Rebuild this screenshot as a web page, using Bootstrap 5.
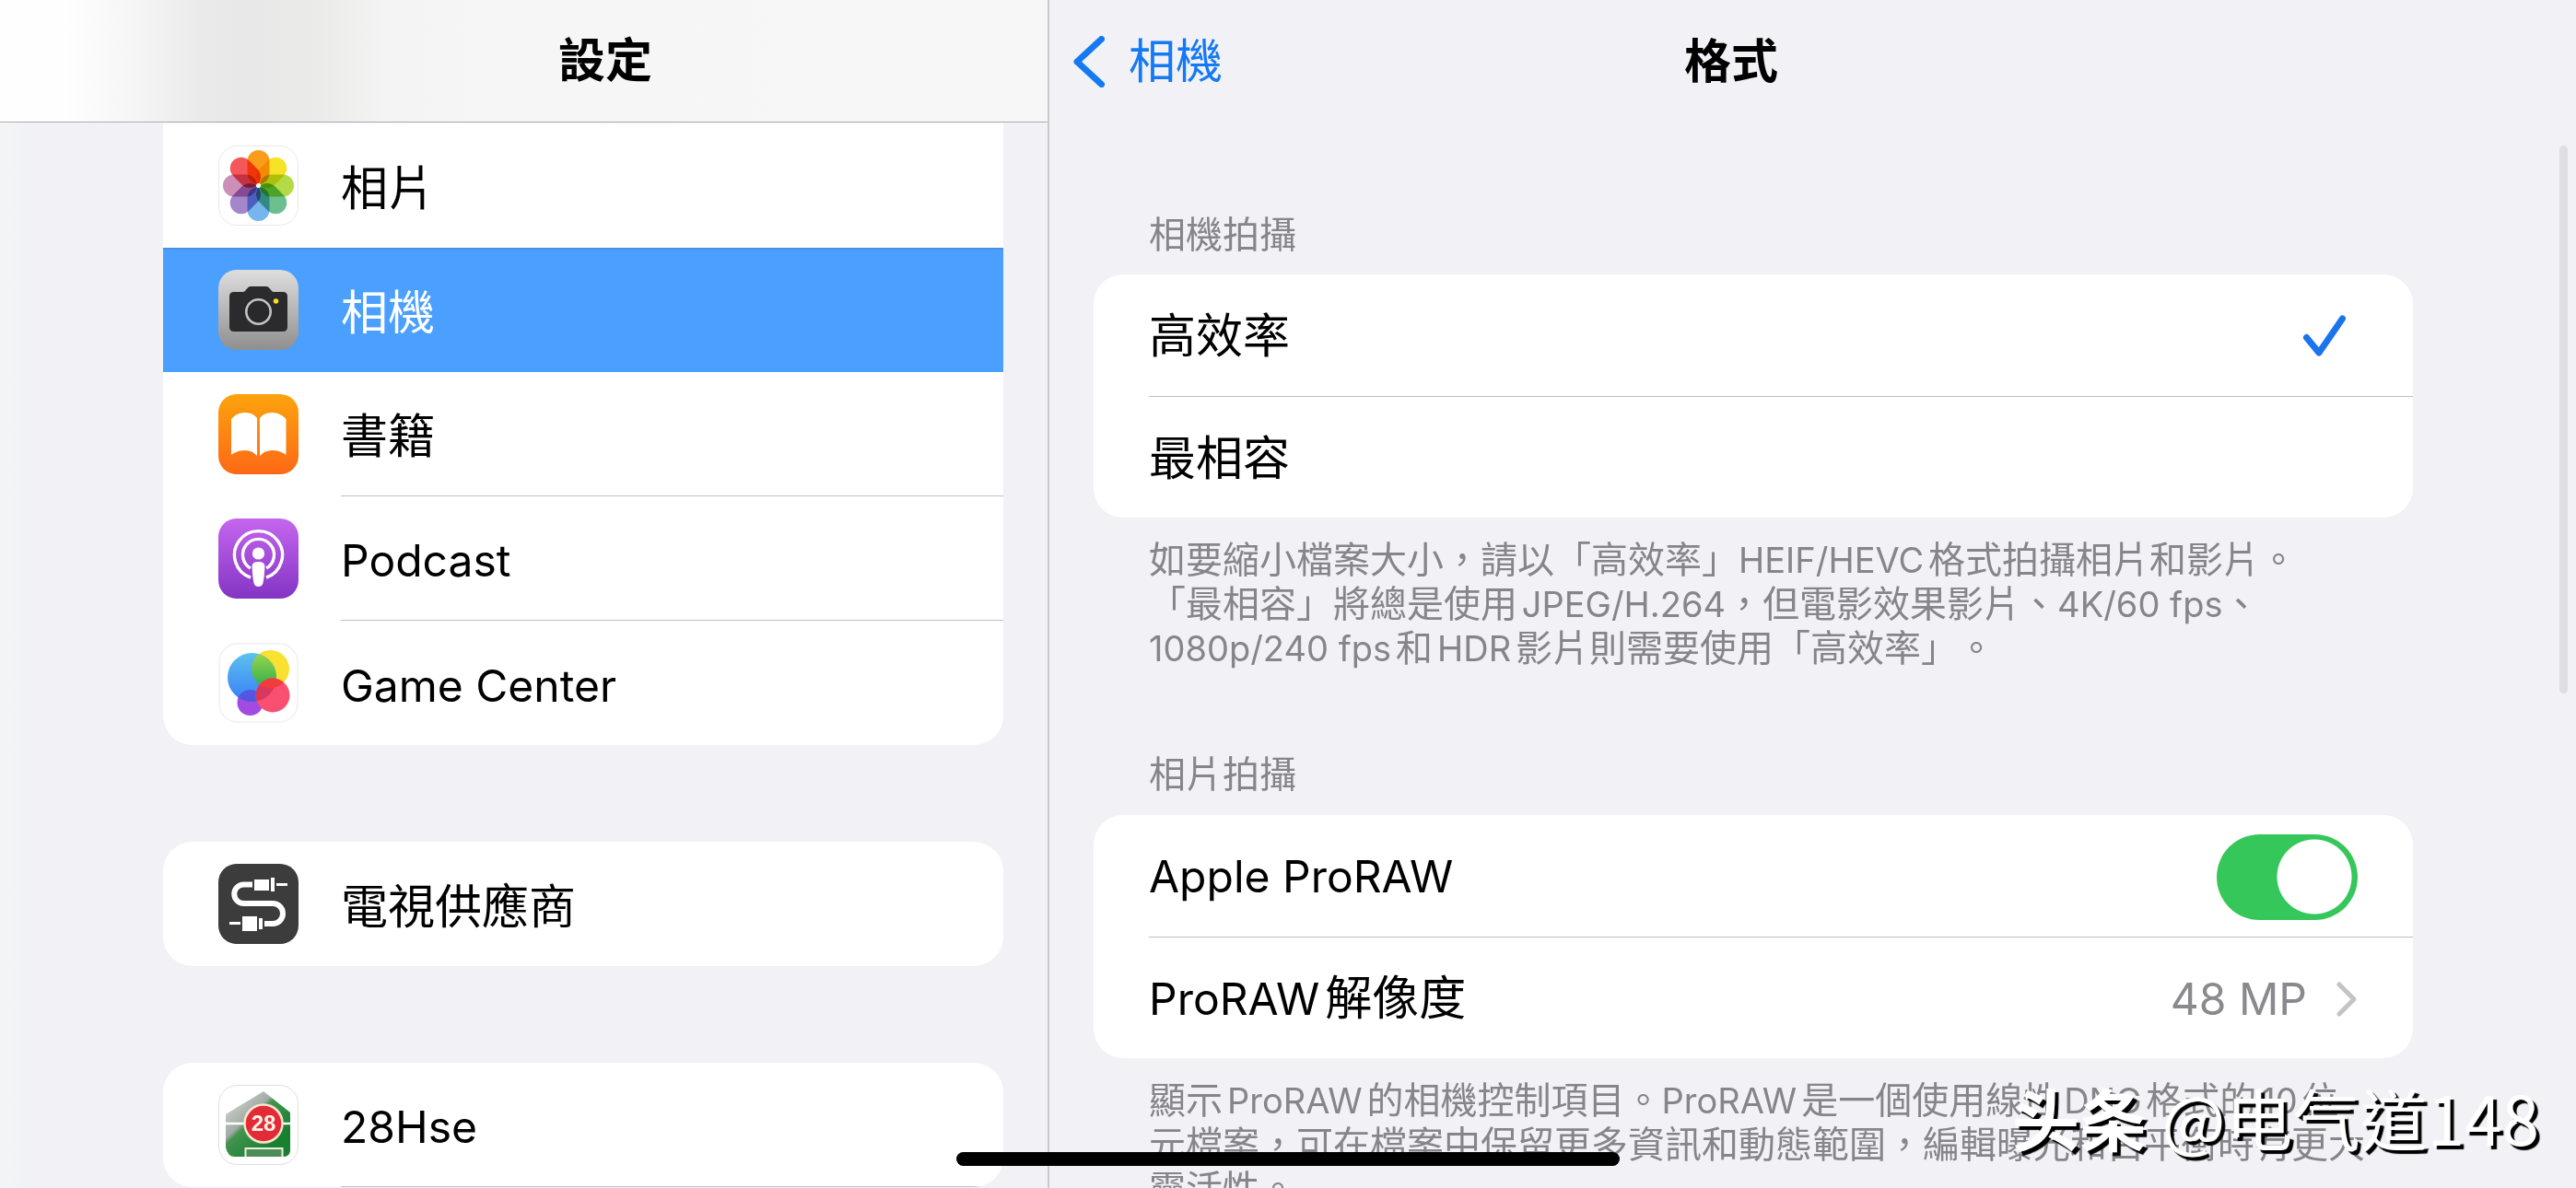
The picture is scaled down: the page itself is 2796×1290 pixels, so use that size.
<!DOCTYPE html>
<html lang="zh-Hant">
<head>
<meta charset="utf-8">
<meta name="viewport" content="width=device-width, initial-scale=1">
<title>設定</title>
<link href="https://cdn.jsdelivr.net/npm/bootstrap@5.3.0/dist/css/bootstrap.min.css" rel="stylesheet">
<script src="https://cdn.jsdelivr.net/npm/bootstrap@5.3.0/dist/js/bootstrap.bundle.min.js"></script>
<style>
  body { background: #f1f1f6; color: #000; font: 400 51px/64px Inter, "Noto Sans CJK TC", sans-serif; text-autospace: normal; text-spacing-trim: space-all; }
  a { text-decoration: none; color: inherit; }

  /* two-pane shell */
  .panes { grid-template-columns: 1139fr 1657fr; }
  .side-pane { min-width: 0; border-right: 2px solid #c9c9cd; background: linear-gradient(90deg, #f3f5f5, #f1f1f6 36px); }
  .main-pane { min-width: 0; padding-right: 177px; }
  .bar-top { height: 133px; flex: none; }
  .side-bar { padding-left: 177px; border-bottom: 1px solid #acacb0; background: linear-gradient(90deg, #fefefe 70px, #f4f5f4 150px, #e9eae9 220px, #e7e8e7 270px, #ebecea 350px, #f3f4f3 420px, #f6f6f6 560px, #f7f7f7); }
  .bar-title { font-size: 51px; font-weight: 700; line-height: 64px; }
  .lat { font-size: 48px; }

  /* sidebar groups */
  .side-list { padding: 0 48px 0 177px; gap: 105px; margin-top: 1px; }
  .set-group { background: #fff; border-radius: 32px; overflow: hidden; }
  .set-group.cut-top { border-top-left-radius: 0; border-top-right-radius: 0; }
  .app-row { height: 135px; padding-left: 60px; gap: 46px; }
  .app-row svg { width: 87px; height: 87px; flex: none; }
  .app-name { height: 135px; padding-top: 6px; }
  .ruled .app-name { border-bottom: 1px solid #bfbfc2; }
  .app-row.current { background: #4b9fff; color: #fff; box-shadow: inset 0 2px #4b91e0; }

  /* detail pane */
  .back-link { color: #1479f2; gap: 26px; padding-left: 26px; }
  .nav-cell { flex: 1 1 0; }
  .detail { padding-left: 48px; }
  .cap-text, .foot-text { font-size: 40px; line-height: 48px; color: #85858a; padding-left: 60px; }
  .cap-text { margin: 0 0 20px; font-weight: 400; }
  .cap-first { padding-top: 98px; margin-bottom: 19px; }
  .foot-text { margin: 22px 0 89px; white-space: nowrap; }
  .foot-text .lat { font-size: 38px; line-height: 40px; }
  .opt-row { height: 132px; margin-left: 60px; padding: 2px 60px 0 0; cursor: pointer; }
  .opt-row + .opt-row { border-top: 1px solid #bfbfc2; }
  .tick { display: none; margin-right: 12px; }
  input:checked + .tick { display: block; }
  .form-check-input.toggle { width: 153px; height: 93px; margin: 0; border: 0; border-radius: 47px; background: #ccc radial-gradient(circle at 47px 46px, #fff 40px, transparent 41px); }
  .form-check-input.toggle:checked { background: #35c75a radial-gradient(circle at 106px 46px, #fff 40px, transparent 41px); }
  .val-text { color: #8a8a8e; gap: 32px; }

  /* overlays */
  .scroll-thumb { position: fixed; right: 9px; top: 158px; width: 9px; height: 595px; border-radius: 5px; background: #dedee3; }
  .home-pill { position: fixed; left: 50%; bottom: 24px; width: 720px; height: 15px; margin-left: -360px; border-radius: 8px; background: #000; }
  .credit { position: fixed; right: 40px; bottom: 33px; font: 400 73px/90px "Noto Sans CJK SC", sans-serif; color: #fff; text-shadow: 4px 4px 1px #000, 2px 2px 0 #fff; white-space: nowrap; text-autospace: no-autospace; }
  .credit b { font-weight: 700; }
</style>
</head>
<body>
<div class="panes d-grid vh-100 overflow-hidden">

  <nav class="side-pane d-flex flex-column overflow-hidden" aria-label="設定">
    <div class="bar-top side-bar d-flex align-items-center justify-content-center"><h1 class="bar-title m-0">設定</h1></div>
    <div class="side-list d-flex flex-column">
      <div class="set-group cut-top flex-shrink-0">
        <a href="#" class="app-row d-flex align-items-center">
          <svg viewBox="0 0 87 87" aria-hidden="true">
            <rect x=".5" y=".5" width="86" height="86" rx="20" fill="#fff" stroke="#e8e8e8"/>
            <g style="isolation:isolate">
              <g class="petals">
                <rect x="31.500" y="5" width="24" height="37" rx="12" fill="#fb9d1a" style="mix-blend-mode:multiply"/>
                <rect x="31.500" y="5" width="24" height="37" rx="12" fill="#f6e226" style="mix-blend-mode:multiply" transform="rotate(45 43.5 43.5)"/>
                <rect x="31.500" y="5" width="24" height="37" rx="12" fill="#b4da45" style="mix-blend-mode:multiply" transform="rotate(90 43.5 43.5)"/>
                <rect x="31.500" y="5" width="24" height="37" rx="12" fill="#6cbf8e" style="mix-blend-mode:multiply" transform="rotate(135 43.5 43.5)"/>
                <rect x="31.500" y="5" width="24" height="37" rx="12" fill="#76b5ee" style="mix-blend-mode:multiply" transform="rotate(180 43.5 43.5)"/>
                <rect x="31.500" y="5" width="24" height="37" rx="12" fill="#a487cb" style="mix-blend-mode:multiply" transform="rotate(225 43.5 43.5)"/>
                <rect x="31.500" y="5" width="24" height="37" rx="12" fill="#cc8fb8" style="mix-blend-mode:multiply" transform="rotate(270 43.5 43.5)"/>
                <rect x="31.500" y="5" width="24" height="37" rx="12" fill="#f5565a" style="mix-blend-mode:multiply" transform="rotate(315 43.5 43.5)"/>
              </g>
            </g>
            <circle cx="43.500" cy="43.500" r="2.500" fill="#fff"/>
          </svg>
          <span class="app-name flex-grow-1 d-flex align-items-center">相片</span>
        </a>
        <a href="#" class="app-row current d-flex align-items-center" aria-current="page">
          <svg viewBox="0 0 87 87" aria-hidden="true">
            <defs><linearGradient id="gCam" x2="0" y2="1"><stop stop-color="#dededf"/><stop offset="1" stop-color="#8f8f8f"/></linearGradient></defs>
            <rect width="87" height="87" rx="20" fill="url(#gCam)"/>
            <path d="M17 24h10c3 0 4-6 8-6h17c4 0 5 6 8 6h10q5 0 5 5v33q0 5-5 5H17q-5 0-5-5V29q0-5 5-5z" fill="#2b2b2d"/>
            <circle cx="43.500" cy="45.500" r="13.200" fill="#29292b" stroke="#c4c4c4" stroke-width="2.600"/>
            <circle cx="62.500" cy="34" r="2.800" fill="#f6e21c"/>
          </svg>
          <span class="app-name flex-grow-1 d-flex align-items-center">相機</span>
        </a>
        <a href="#" class="app-row ruled d-flex align-items-center">
          <svg viewBox="0 0 87 87" aria-hidden="true">
            <defs><linearGradient id="gBook" x2="0" y2="1"><stop stop-color="#fda30d"/><stop offset="1" stop-color="#fd6816"/></linearGradient></defs>
            <rect width="87" height="87" rx="20" fill="url(#gBook)"/>
            <path d="M14 27Q20 20 29 20Q38 20 42 26V67Q37 61 29 61Q20 61 14 66Z M73.500 27Q67 20 58.500 20Q49 20 45 26V67Q50 61 58.500 61Q67 61 73.500 66Z" fill="#fff"/>
          </svg>
          <span class="app-name flex-grow-1 d-flex align-items-center">書籍</span>
        </a>
        <a href="#" class="app-row ruled d-flex align-items-center">
          <svg viewBox="0 0 87 87" aria-hidden="true">
            <defs><linearGradient id="gPod" x2="0" y2="1"><stop stop-color="#c566ee"/><stop offset="1" stop-color="#8334c4"/></linearGradient></defs>
            <rect width="87" height="87" rx="20" fill="url(#gPod)"/>
            <g fill="none" stroke="#fff" stroke-width="3.400">
              <path d="M35 64.200A26 26 0 1 1 52 64.200"/>
              <path d="M34.800 54A17 17 0 1 1 52.200 54"/>
            </g>
            <circle cx="43.500" cy="38" r="6.600" fill="#fff"/>
            <path d="M36.600 52Q36.600 47 43.500 47T50.400 52Q50 63 48.500 70Q47.500 74 43.500 74T38.500 70Q37 63 36.600 52Z" fill="#fff"/>
          </svg>
          <span class="app-name lat flex-grow-1 d-flex align-items-center">Podcast</span>
        </a>
        <a href="#" class="app-row d-flex align-items-center">
          <svg viewBox="0 0 87 87" aria-hidden="true">
            <defs>
              <linearGradient id="gBlue" x2="0" y2="1"><stop stop-color="#5cc3ec"/><stop offset=".5" stop-color="#4a9ff2"/><stop offset="1" stop-color="#3a80fa"/></linearGradient>
              <linearGradient id="gGreen" x2="0" y2="1"><stop stop-color="#a3d84c"/><stop offset="1" stop-color="#2fae4f"/></linearGradient>
              <clipPath id="cBlue"><circle cx="36.500" cy="37.500" r="26.500"/></clipPath>
              <clipPath id="cYel"><circle cx="56.500" cy="28.500" r="20.500"/></clipPath>
            </defs>
            <rect x="1" y="1" width="85" height="85" rx="20" fill="#fff" stroke="#f3f3f3" stroke-width="2"/>
            <circle cx="34.500" cy="65" r="14" fill="#a24be0"/>
            <circle cx="56.500" cy="28.500" r="20.500" fill="#fae02f"/>
            <circle cx="36.500" cy="37.500" r="26.500" fill="url(#gBlue)"/>
            <circle cx="34.500" cy="65" r="14" fill="#5a46d8" opacity=".75" clip-path="url(#cBlue)"/>
            <circle cx="56.500" cy="28.500" r="20.500" fill="url(#gGreen)" clip-path="url(#cBlue)"/>
            <circle cx="59" cy="57" r="18.500" fill="#fb4f72"/>
            <circle cx="59" cy="57" r="18.500" fill="#d8385c" clip-path="url(#cBlue)"/>
            <circle cx="59" cy="57" r="18.500" fill="#f23c3c" clip-path="url(#cYel)"/>
          </svg>
          <span class="app-name lat flex-grow-1 d-flex align-items-center">Game Center</span>
        </a>
      </div>

      <div class="set-group flex-shrink-0">
        <a href="#" class="app-row d-flex align-items-center">
          <svg viewBox="0 0 87 87" aria-hidden="true">
            <rect width="87" height="87" rx="20" fill="#3c3c3d"/>
            <path d="M37 22.500H27.500a10.250 10.250 0 0 0 0 20.500H59a11 11 0 0 1 0 22H50" fill="none" stroke="#fff" stroke-width="6"/>
            <path d="M39 17h16v12H39zM57 15h4v15h-4zM63 21h12v3H63zM26 57h16v16H26zM44 59h4v12h-4zM12 63h12v3H12z" fill="#fff"/>
          </svg>
          <span class="app-name flex-grow-1 d-flex align-items-center">電視供應商</span>
        </a>
      </div>

      <div class="set-group flex-shrink-0">
        <a href="#" class="app-row ruled d-flex align-items-center">
          <svg viewBox="0 0 87 87" aria-hidden="true">
            <defs><linearGradient id="gHse" x1=".1" y1=".1" x2=".75" y2=".8"><stop stop-color="#d0d2d0"/><stop offset=".4" stop-color="#a3aca4"/><stop offset=".48" stop-color="#43934f"/><stop offset="1" stop-color="#17812f"/></linearGradient></defs>
            <rect x=".5" y=".5" width="86" height="86" rx="20" fill="#fff" stroke="#dedede"/>
            <path d="M49 7L78 30V72Q77 78 70 78H18Q10 78 8 68V32Z" fill="url(#gHse)"/>
            <path d="M8 42H78" stroke="#fff" stroke-width="2.500"/>
            <path d="M29.500 78V69H69.500V78" fill="#4b8f58" stroke="#f2eedc" stroke-width="2"/>
            <circle cx="49" cy="42" r="20.500" fill="#e32b37" stroke="#f8e6cf" stroke-width="2.500"/>
            <text x="49" y="50" text-anchor="middle" font-family="Liberation Sans, sans-serif" font-weight="700" font-size="24" fill="#fff4e8">28</text>
          </svg>
          <span class="app-name lat flex-grow-1 d-flex align-items-center">28Hse</span>
        </a>
      </div>
    </div>
  </nav>

  <main class="main-pane">
    <header class="bar-top d-flex align-items-center">
      <div class="nav-cell">
        <a href="#" class="back-link d-flex align-items-center">
          <svg width="34" height="56" viewBox="0 0 34 56" aria-hidden="true"><path d="M30.500 3.500L4 28L30.500 52.500" fill="none" stroke="#1479f2" stroke-width="7" stroke-linecap="round" stroke-linejoin="round"/></svg>
          <span>相機</span>
        </a>
      </div>
      <h2 class="bar-title m-0">格式</h2>
      <div class="nav-cell"></div>
    </header>

    <div class="detail">
      <h3 class="cap-text cap-first">相機拍攝</h3>
      <div class="set-group" role="radiogroup" aria-label="相機拍攝">
        <label class="opt-row d-flex align-items-center justify-content-between">
          <span>高效率</span>
          <input type="radio" name="capture" class="visually-hidden" checked>
          <svg class="tick" width="48" height="46" viewBox="0 0 48 46" aria-hidden="true"><path d="M4.500 24.500L18 41L43.500 4" fill="none" stroke="#1b74ec" stroke-width="7" stroke-linecap="round" stroke-linejoin="round"/></svg>
        </label>
        <label class="opt-row d-flex align-items-center justify-content-between">
          <span>最相容</span>
          <input type="radio" name="capture" class="visually-hidden">
          <svg class="tick" width="48" height="46" viewBox="0 0 48 46" aria-hidden="true"><path d="M4.500 24.500L18 41L43.500 4" fill="none" stroke="#1b74ec" stroke-width="7" stroke-linecap="round" stroke-linejoin="round"/></svg>
        </label>
      </div>
      <p class="foot-text">如要縮小檔案大小，請以「高效率」<span class="lat">HEIF/HEVC</span>格式拍攝相片和影片。<br>「最相容」將總是使用<span class="lat">JPEG/H.264</span>，但電影效果影片、<span class="lat">4K/60 fps</span>、<br><span class="lat">1080p/240 fps</span>和<span class="lat">HDR</span>影片則需要使用「高效率」。</p>

      <h3 class="cap-text">相片拍攝</h3>
      <div class="set-group">
        <div class="opt-row d-flex align-items-center justify-content-between">
          <label for="proraw" class="lat">Apple ProRAW</label>
          <input id="proraw" type="checkbox" role="switch" class="form-check-input toggle" checked>
        </div>
        <a href="#" class="opt-row d-flex align-items-center justify-content-between">
          <span><span class="lat">ProRAW</span>解像度</span>
          <span class="val-text lat d-flex align-items-center">48 MP
            <svg width="23" height="38" viewBox="0 0 23 38" aria-hidden="true"><path d="M3 3L19 19L3 35" fill="none" stroke="#c4c4c7" stroke-width="5" stroke-linecap="round" stroke-linejoin="round"/></svg>
          </span>
        </a>
      </div>
      <p class="foot-text">顯示<span class="lat">ProRAW</span>的相機控制項目。<span class="lat">ProRAW</span>是一個使用線性<span class="lat">DNG</span>格式的<span class="lat">10</span>位<br>元檔案，可在檔案中保留更多資訊和動態範圍，編輯曝光和白平衡時有更大<br>靈活性。</p>
    </div>
  </main>
</div>

<div class="scroll-thumb"></div>
<div class="home-pill"></div>
<div class="credit"><b>头条</b> @电气道148</div>
</body>
</html>
